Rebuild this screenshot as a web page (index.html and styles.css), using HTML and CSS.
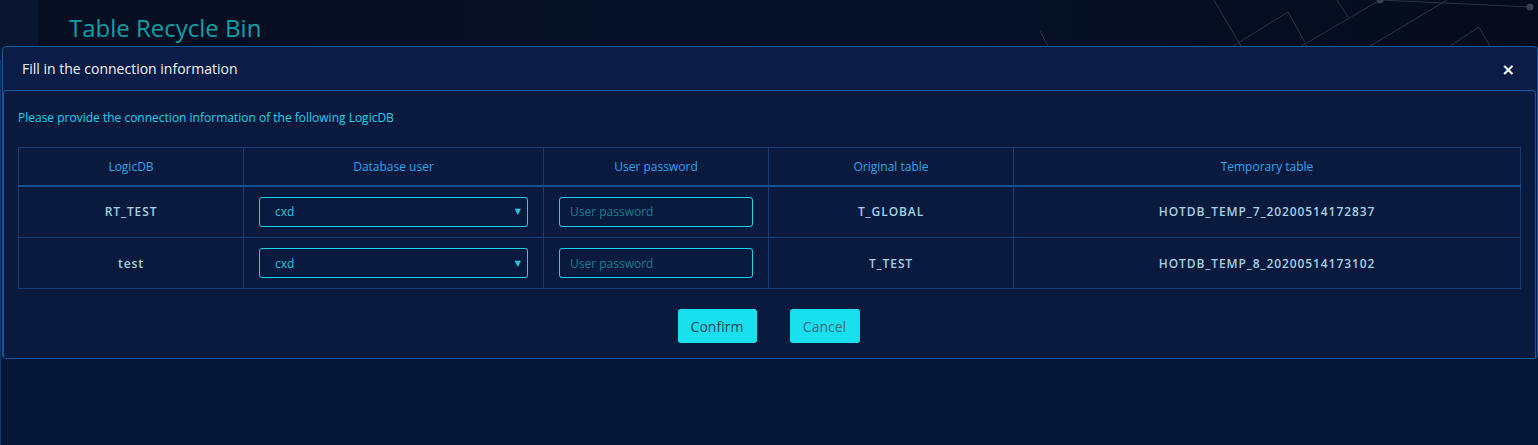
FILE: index.html
```html
<!DOCTYPE html>
<html lang="en">
<head>
<meta charset="utf-8">
<title>Table Recycle Bin</title>
<link rel="stylesheet" href="styles.css">
</head>
<body>
<div class="page">
  <svg class="net" width="1538" height="60" viewBox="0 0 1538 60" aria-hidden="true">
    <g stroke="#2b3447" stroke-width="1" fill="none">
      <line x1="1040" y1="31" x2="1049" y2="48"/>
      <line x1="1214" y1="0" x2="1242" y2="48"/>
      <polyline points="1230,48 1288,12 1308,48"/>
      <line x1="1298" y1="48" x2="1380" y2="0"/>
      <line x1="1337" y1="0" x2="1348" y2="17"/>
      <line x1="1367" y1="48" x2="1447" y2="0"/>
      <line x1="1380" y1="0" x2="1530" y2="7"/>
      <polyline points="1447,48 1479,27 1491,48"/>
    </g>
    <g fill="#373f50">
      <circle cx="1380" cy="0" r="3.5"/>
      <circle cx="1530" cy="7" r="3.5"/>
    </g>
  </svg>
  <header class="topbar">
    <div class="side"></div>
    <h1 class="title">Table Recycle Bin</h1>
  </header>
  <main class="main"></main>
  <div class="scroll-mark"></div>

  <div class="modal">
    <div class="modal-head">
      <span class="modal-title">Fill in the connection information</span>
      <span class="close">×</span>
    </div>
    <div class="modal-body">
      <p class="hint">Please provide the connection information of the following LogicDB</p>
      <table class="grid">
        <colgroup>
          <col class="c1"><col class="c2"><col class="c3"><col class="c4"><col class="c5">
        </colgroup>
        <thead>
          <tr>
            <th>LogicDB</th>
            <th>Database user</th>
            <th>User password</th>
            <th>Original table</th>
            <th>Temporary table</th>
          </tr>
        </thead>
        <tbody>
          <tr>
            <td>RT_TEST</td>
            <td class="ctl"><div class="select"><span>cxd</span><span class="arrow">▼</span></div></td>
            <td class="ctl"><div class="input">User password</div></td>
            <td>T_GLOBAL</td>
            <td>HOTDB_TEMP_7_20200514172837</td>
          </tr>
          <tr>
            <td>test</td>
            <td class="ctl"><div class="select"><span>cxd</span><span class="arrow">▼</span></div></td>
            <td class="ctl"><div class="input">User password</div></td>
            <td>T_TEST</td>
            <td>HOTDB_TEMP_8_20200514173102</td>
          </tr>
        </tbody>
      </table>
      <div class="actions">
        <button class="btn btn-confirm">Confirm</button>
        <button class="btn btn-cancel">Cancel</button>
      </div>
    </div>
  </div>
</div>
</body>
</html>
```

FILE: styles.css
```css
* { box-sizing: border-box; }
html, body { margin: 0; padding: 0; }
body {
  width: 1538px;
  height: 445px;
  overflow: hidden;
  background: #061636;
  font-family: "Open Sans", "Noto Sans", sans-serif;
}
.page {
  position: relative;
  width: 1538px;
  height: 445px;
  display: flex;
  flex-direction: column;
}
.net {
  position: absolute;
  left: 0;
  top: 0;
}
.topbar {
  height: 60px;
  display: flex;
  background: linear-gradient(90deg, #050d21 0%, #061027 60%, #040b1c 100%);
}
.side {
  width: 38px;
  background: #0a152f;
}
.title {
  margin: 12px 0 0 31px;
  font-size: 24px;
  font-weight: 400;
  color: #10a0a8;
  line-height: 32px;
  position: relative;
}
.main {
  flex: 1;
  background: #061636;
  border-left: 1px solid #0f3a6a;
}
.scroll-mark {
  position: absolute;
  right: 0;
  top: 110px;
  width: 3px;
  height: 26px;
  background: #1a6c9c;
}

.modal {
  position: absolute;
  left: 2px;
  top: 46px;
  width: 1536px;
  background: #0b1c46;
  border: 1px solid #15599b;
  border-radius: 4px;
}
.modal-head {
  height: 43px;
  display: flex;
  align-items: center;
  justify-content: space-between;
  padding: 0 22px 0 19px;
}
.modal-title {
  color: #eef2f8;
  font-size: 14px;
  line-height: 20px;
}
.close {
  color: #ffffff;
  font-family: "DejaVu Sans", sans-serif;
  font-size: 16px;
  font-weight: 700;
  line-height: 16px;
  margin-top: 3px;
}
.modal-body {
  margin-right: 1px;
  background: #0a1a3e;
  border: 1px solid #15599b;
  border-bottom: none;
  border-radius: 4px 4px 0 0;
  padding: 19px 14px 15px 14px;
}
.hint {
  margin: 0 0 21px 0;
  color: #18d3e6;
  font-size: 12px;
  line-height: 16px;
}
.grid {
  width: 1502px;
  border-collapse: collapse;
  table-layout: fixed;
}
.c1 { width: 225px; }
.c2 { width: 300px; }
.c3 { width: 225px; }
.c4 { width: 245px; }
.c5 { width: 507px; }
.grid th, .grid td {
  border: 1px solid #123c76;
  text-align: center;
  font-size: 12px;
  padding: 0;
}
.grid th {
  height: 38px;
  color: #2ea5ec;
  font-weight: 400;
  border-bottom: 2px solid #14508f;
}
.grid tbody tr:first-child td { height: 52px; }
.grid td {
  height: 51px;
  color: #a4d0e2;
  font-weight: 600;
  letter-spacing: 0.9px;
}
.grid td.ctl {
  padding: 0 15px;
  letter-spacing: 0;
  font-weight: 400;
}
.select, .input {
  height: 30px;
  border: 1px solid #18d3e6;
  border-radius: 3px;
  display: flex;
  align-items: center;
  font-size: 12px;
  text-align: left;
}
.select {
  justify-content: space-between;
  padding: 0 6px 0 15px;
  color: #28c4dc;
}
.arrow {
  font-size: 8px;
  color: #28c4dc;
  font-family: "DejaVu Sans", sans-serif;
}
.input {
  padding: 0 10px;
  color: #177f90;
  width: 194px;
}
.actions {
  display: flex;
  justify-content: center;
  gap: 33px;
  margin-top: 20px;
  padding-right: 2px;
}
.btn {
  height: 34px;
  border: none;
  border-radius: 3px;
  background: #19e0ee;
  font-family: "Open Sans", "Noto Sans", sans-serif;
  font-size: 14px;
  padding: 0 13px;
  cursor: pointer;
}
.btn-confirm { color: #2a4658; width: 79px; }
.btn-cancel { color: #3b6a7c; width: 70px; }
```
